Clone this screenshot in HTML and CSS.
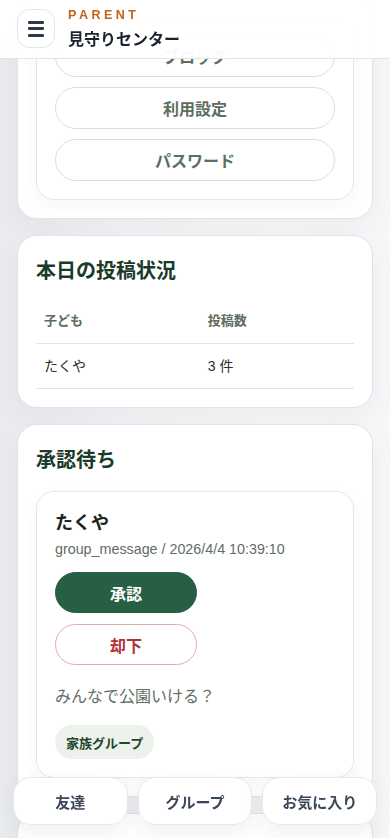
FILE: index.html
```html
<!DOCTYPE html>
<html lang="ja">
<head>
<meta charset="utf-8">
<meta name="viewport" content="width=device-width, initial-scale=1">
<title>見守りセンター</title>
<link rel="stylesheet" href="styles.css">
</head>
<body>
<header class="topbar">
  <button class="menu-btn" aria-label="メニュー">
    <span class="bar"></span><span class="bar"></span><span class="bar"></span>
  </button>
  <div class="brand">
    <div class="brand-kicker">PARENT</div>
    <div class="brand-title">見守りセンター</div>
  </div>
</header>

<main class="content">
  <section class="card card-settings">
    <div class="subcard settings-list">
      <button class="ghost-btn">ブロック</button>
      <button class="ghost-btn">利用設定</button>
      <button class="ghost-btn">パスワード</button>
    </div>
  </section>

  <section class="card">
    <h2 class="card-title">本日の投稿状況</h2>
    <table class="stats">
      <thead>
        <tr><th class="col-child">子ども</th><th>投稿数</th></tr>
      </thead>
      <tbody>
        <tr><td class="col-child">たくや</td><td>3 件</td></tr>
      </tbody>
    </table>
  </section>

  <section class="card">
    <h2 class="card-title title-pending">承認待ち</h2>
    <article class="subcard pending">
      <div class="pending-name">たくや</div>
      <div class="pending-meta">group_message / 2026/4/4 10:39:10</div>
      <button class="btn-approve">承認</button>
      <button class="btn-reject">却下</button>
      <p class="pending-msg">みんなで公園いける？</p>
      <span class="tag">家族グループ</span>
    </article>
  </section>

  <section class="card card-empty"></section>
</main>

<nav class="bottom-nav">
  <button class="nav-btn">友達</button>
  <button class="nav-btn">グループ</button>
  <button class="nav-btn">お気に入り</button>
</nav>
</body>
</html>
```

FILE: styles.css
```css
* { box-sizing: border-box; }

html, body {
  margin: 0;
  padding: 0;
}

body {
  font-family: "Liberation Sans", "Noto Sans CJK JP", sans-serif;
  background: linear-gradient(90deg, #e9ebee 0%, #f3f4f6 30%, #f8f8f9 70%, #f6f7f8 100%);
  background-attachment: fixed;
  color: #1f2a24;
  min-height: 100vh;
}

button {
  font-family: inherit;
  cursor: pointer;
}

/* Header */
.topbar {
  position: fixed;
  top: 0;
  left: 0;
  right: 0;
  height: 59px;
  z-index: 10;
  display: flex;
  align-items: flex-start;
  gap: 13px;
  padding: 0 17px;
  background: rgba(255, 255, 255, 0.96);
  border-bottom: 1px solid #e1e4e8;
}

.menu-btn {
  width: 38px;
  height: 39px;
  margin-top: 9px;
  border: 1px solid #e2e5ea;
  border-radius: 12px;
  background: #fff;
  display: flex;
  flex-direction: column;
  align-items: center;
  justify-content: center;
  gap: 3.5px;
  padding: 0;
}

.menu-btn .bar {
  display: block;
  width: 16px;
  height: 3px;
  border-radius: 1px;
  background: #2e3a4b;
}

.brand {
  display: flex;
  flex-direction: column;
  padding-top: 7px;
}

.brand-kicker {
  font-size: 12.5px;
  font-weight: 700;
  letter-spacing: 3.5px;
  color: #c0631b;
  line-height: 16px;
}

.brand-title {
  font-size: 16px;
  font-weight: 700;
  color: #1b2230;
  line-height: 22px;
  margin-top: 6px;
}

/* Content */
.content {
  padding: 0 17px 120px;
  display: flex;
  flex-direction: column;
  gap: 16px;
}

.card {
  background: #fff;
  border: 1px solid #dfe4ec;
  border-radius: 20px;
  padding: 18px;
  box-shadow: 0 10px 28px rgba(30, 41, 59, 0.05);
}

.card-settings {
  margin-top: -3px;
}

.card-empty {
  min-height: 160px;
}

.subcard {
  background: #fff;
  border: 1px solid #e1e6ee;
  border-radius: 18px;
  padding: 18px;
  box-shadow: 0 6px 18px rgba(30, 41, 59, 0.04);
}

.settings-list {
  display: flex;
  flex-direction: column;
  gap: 10px;
}

.ghost-btn {
  height: 42px;
  border: 1px solid #d8e1d6;
  border-radius: 21px;
  background: #fff;
  color: #5b6e5f;
  font-size: 16px;
  font-weight: 700;
}

.card-title {
  margin: 0 0 12px;
  font-size: 20px;
  line-height: 34px;
  font-weight: 700;
  color: #1b3a29;
}

.title-pending {
  margin-bottom: 14px;
}

/* Table */
.stats {
  width: 100%;
  border-collapse: collapse;
  font-size: 14px;
}

.stats th,
.stats td {
  text-align: left;
  padding: 12px 8px;
  line-height: 20px;
}

.stats .col-child {
  width: 51.5%;
}

.stats th {
  font-size: 13px;
  font-weight: 700;
  color: #5d6c62;
  padding-top: 11px;
  border-bottom: 1px solid #e1e5ea;
}

.stats td {
  color: #2b302d;
  border-bottom: 1px solid #e1e5ea;
}

/* Pending item */
.pending {
  display: flex;
  flex-direction: column;
  align-items: flex-start;
}

.pending-name {
  font-size: 18px;
  line-height: 26px;
  font-weight: 700;
  color: #1c2420;
}

.pending-meta {
  margin-top: 2px;
  font-size: 14.3px;
  line-height: 22px;
  color: #5f6d64;
}

.btn-approve,
.btn-reject {
  width: 142px;
  height: 41px;
  border-radius: 21px;
  font-size: 16px;
  font-weight: 700;
}

.btn-approve {
  margin-top: 12px;
  background: #275f44;
  border: 1px solid #275f44;
  color: #fff;
}

.btn-reject {
  margin-top: 11px;
  background: #fff;
  border: 1px solid #e8aab0;
  color: #b3303b;
}

.pending-msg {
  margin: 20px 0 0;
  font-size: 16px;
  line-height: 24px;
  color: #5f6e65;
}

.tag {
  margin-top: 16px;
  display: inline-flex;
  align-items: center;
  height: 34px;
  padding: 0 11px;
  border-radius: 17px;
  background: #ecf2eb;
  color: #1f4630;
  font-size: 13px;
  font-weight: 700;
}

/* Bottom nav */
.bottom-nav {
  position: fixed;
  left: 13px;
  right: 13px;
  bottom: 13px;
  z-index: 10;
  display: grid;
  grid-template-columns: repeat(3, 1fr);
  gap: 10px;
}

.nav-btn {
  height: 48px;
  border: 1px solid #e4e7ec;
  border-radius: 18px;
  background: rgba(255, 255, 255, 0.97);
  color: #3b4659;
  font-size: 15px;
  font-weight: 700;
  box-shadow: 0 8px 22px rgba(30, 41, 59, 0.07);
}
```
